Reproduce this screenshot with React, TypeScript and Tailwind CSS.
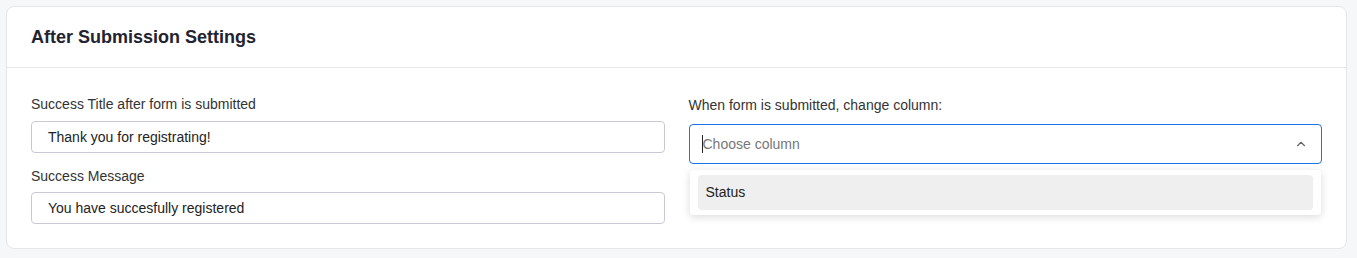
import { ChevronUp } from "lucide-react";

export default function App() {
  return (
    <div className="min-h-[258px] bg-[#f6f7f8] pt-[6px] pl-[6px] pr-[10px] pb-[9px] font-['Liberation_Sans',Arial,sans-serif]">
      <div className="rounded-lg border border-[#e4e6ea] bg-white">
        <div className="flex h-[61px] items-center border-b border-[#e4e6ea] px-6">
          <h2 className="pt-px text-[18px] font-bold text-[#1f2430]">After Submission Settings</h2>
        </div>

        <div className="grid grid-cols-2 gap-6 px-6 pt-[26px] pb-6">
          <div className="flex flex-col">
            <label className="text-[14px] leading-5 text-[#333]">Success Title after form is submitted</label>
            <input
              defaultValue="Thank you for registrating!"
              className="mt-[7px] h-8 rounded border border-[#c9c9d6] px-4 text-[14px] text-[#222] outline-none"
            />
            <label className="mt-[13px] text-[14px] leading-5 text-[#333]">Success Message</label>
            <input
              defaultValue="You have succesfully registered"
              className="mt-[6px] h-8 rounded border border-[#c9c9d6] px-4 text-[14px] text-[#222] outline-none"
            />
          </div>

          <div className="relative flex flex-col">
            <label className="mt-px text-[14px] leading-5 text-[#333]">When form is submitted, change column:</label>
            <div className="mt-[9px] flex h-10 items-center rounded border border-[#1a73e8] pl-[12px] pr-[13px]">
              <span className="h-[18px] w-px bg-[#222]" />
              <span className="flex-1 text-[14px] text-[#777]">Choose column</span>
              <ChevronUp className="h-[14px] w-[14px] text-[#666]" strokeWidth={2} />
            </div>
            <div className="absolute top-[76px] left-px right-px rounded bg-white px-2 py-[5px] shadow-[0_2px_8px_rgba(0,0,0,0.15)]">
              <div className="flex h-[35px] items-center rounded bg-[#efefef] px-2 text-[14px] text-[#222]">
                Status
              </div>
            </div>
          </div>
        </div>
      </div>
    </div>
  );
}
